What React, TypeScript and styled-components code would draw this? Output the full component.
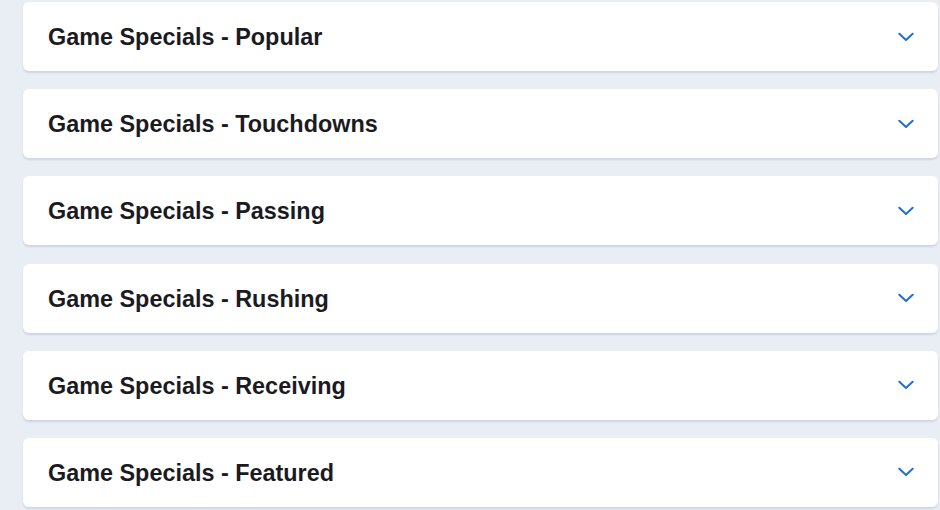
import React from "react";
import styled, { createGlobalStyle } from "styled-components";

const GlobalStyle = createGlobalStyle`
  html, body {
    margin: 0;
    padding: 0;
    background: #e9edf4;
  }
  body {
    font-family: "Liberation Sans", Arial, sans-serif;
  }
`;

const Page = styled.div`
  width: 940px;
  height: 510px;
  box-sizing: border-box;
  padding: 2px 2px 0 23px;
  display: flex;
  flex-direction: column;
  gap: 18.2px;
  overflow: hidden;
`;

const Card = styled.div`
  height: 69px;
  flex: 0 0 69px;
  background: #ffffff;
  border-radius: 6px;
  box-shadow: 0 2px 2px rgba(30, 50, 90, 0.12);
  display: flex;
  align-items: center;
  justify-content: space-between;
  padding: 0 24px 0 25px;
  cursor: pointer;
`;

const Title = styled.span`
  font-family: "Liberation Sans", Arial, sans-serif;
  font-weight: 700;
  font-size: 23.4px;
  color: #1b1b1f;
  margin-top: 2px;
`;

const Chevron = () => (
  <svg width="16" height="10" viewBox="0 0 16 10" fill="none">
    <path
      d="M1.3 1.8 L8 8 L14.7 1.8"
      stroke="#1d6fd8"
      strokeWidth="2"
      strokeLinecap="round"
      strokeLinejoin="round"
    />
  </svg>
);

const items = [
  "Game Specials - Popular",
  "Game Specials - Touchdowns",
  "Game Specials - Passing",
  "Game Specials - Rushing",
  "Game Specials - Receiving",
  "Game Specials - Featured",
];

export default function App() {
  return (
    <>
      <GlobalStyle />
      <Page>
        {items.map((t) => (
          <Card key={t}>
            <Title>{t}</Title>
            <Chevron />
          </Card>
        ))}
      </Page>
    </>
  );
}
